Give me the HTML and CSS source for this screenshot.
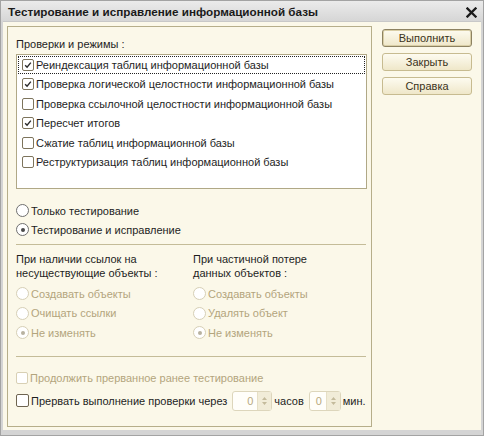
FILE: index.html
```html
<!DOCTYPE html>
<html lang="ru">
<head>
<meta charset="utf-8">
<title>Тестирование и исправление информационной базы</title>
<link rel="stylesheet" href="styles.css">
</head>
<body>
<div class="window">
  <div class="titlebar">
    <span class="title">Тестирование и исправление информационной базы</span>
    <svg class="close" width="11" height="11" viewBox="0 0 11 11"><path d="M1.5 1.5 L9.5 9.5 M9.5 1.5 L1.5 9.5" stroke="#1a1a1a" stroke-width="2.3" stroke-linecap="square"/></svg>
  </div>
  <div class="client">
    <div class="panel">
      <div class="caption">Проверки и режимы :</div>
      <div class="listbox">
        <div class="item focus"><span class="cb on"><svg viewBox="0 0 12 12"><path d="M2.6 6.2 L4.9 8.6 L9.4 3.2" fill="none" stroke="#2a2a2a" stroke-width="1.7"/></svg></span>Реиндексация таблиц информационной базы</div>
        <div class="item"><span class="cb on"><svg viewBox="0 0 12 12"><path d="M2.6 6.2 L4.9 8.6 L9.4 3.2" fill="none" stroke="#2a2a2a" stroke-width="1.7"/></svg></span>Проверка логической целостности информационной базы</div>
        <div class="item"><span class="cb"></span>Проверка ссылочной целостности информационной базы</div>
        <div class="item"><span class="cb on"><svg viewBox="0 0 12 12"><path d="M2.6 6.2 L4.9 8.6 L9.4 3.2" fill="none" stroke="#2a2a2a" stroke-width="1.7"/></svg></span>Пересчет итогов</div>
        <div class="item"><span class="cb"></span>Сжатие таблиц информационной базы</div>
        <div class="item"><span class="cb"></span>Реструктуризация таблиц информационной базы</div>
      </div>
      <div class="modes">
        <div class="opt"><span class="rb"></span>Только тестирование</div>
        <div class="opt"><span class="rb on"></span>Тестирование и исправление</div>
      </div>
      <div class="sep"></div>
      <div class="cols">
        <div class="col left">
          <div class="collabel">При наличии ссылок на<br>несуществующие объекты :</div>
          <div class="radios">
            <div class="opt dis"><span class="rb"></span>Создавать объекты</div>
            <div class="opt dis"><span class="rb"></span>Очищать ссылки</div>
            <div class="opt dis"><span class="rb on"></span>Не изменять</div>
          </div>
        </div>
        <div class="col">
          <div class="collabel">При частичной потере<br>данных объектов :</div>
          <div class="radios">
            <div class="opt dis"><span class="rb"></span>Создавать объекты</div>
            <div class="opt dis"><span class="rb"></span>Удалять объект</div>
            <div class="opt dis"><span class="rb on"></span>Не изменять</div>
          </div>
        </div>
      </div>
      <div class="sep sep2"></div>
      <div class="opt dis cont"><span class="cb"></span>Продолжить прерванное ранее тестирование</div>
      <div class="opt stop"><span class="cb"></span>Прервать выполнение проверки через
        <span class="spin wide"><span class="val">0</span><span class="arrows"><svg width="9" height="16" viewBox="0 0 9 16"><path d="M4.5 4 L7 7 L2 7 Z M4.5 12 L7 9 L2 9 Z" fill="#c4bb9c"/></svg></span></span><span class="unit">часов</span>
        <span class="spin"><span class="val">0</span><span class="arrows"><svg width="9" height="16" viewBox="0 0 9 16"><path d="M4.5 4 L7 7 L2 7 Z M4.5 12 L7 9 L2 9 Z" fill="#c4bb9c"/></svg></span></span><span class="unit">мин.</span>
      </div>
    </div>
    <div class="buttons">
      <div class="btn default">Выполнить</div>
      <div class="btn">Закрыть</div>
      <div class="btn">Справка</div>
    </div>
  </div>
</div>
</body>
</html>
```
FILE: styles.css
```css
html, body {
  margin: 0;
  padding: 0;
  background: #ffffff;
}

.window {
  width: 484px;
  height: 436px;
  box-sizing: border-box;
  border: 1px solid #a3a3a3;
  background: #d4d4d4;
  display: flex;
  flex-direction: column;
  font-family: "Liberation Sans", Arial, sans-serif;
  font-size: 11px;
  color: #1e1e1e;
}

.titlebar {
  height: 20px;
  flex: none;
  display: flex;
  align-items: center;
  justify-content: space-between;
  padding: 0 6px 0 7px;
  background: linear-gradient(#ebebeb, #d6d6d6);
}

.title {
  font-weight: bold;
  font-size: 11.7px;
  color: #1a1a1a;
}

.close {
  margin-top: 2px;
}

.client {
  flex: 1;
  margin: 0 2px 5px 2px;
  background: #fbf8e9;
  display: flex;
  padding: 4px 9px 3px 4px;
  border-top: 1px solid #c8c8c8;
}

.panel {
  width: 367px;
  box-sizing: border-box;
  border: 1px solid #b6ae8a;
  padding: 10px 4px 0 8px;
  display: flex;
  flex-direction: column;
}

.caption {
  line-height: 14px;
  height: 14px;
}

.listbox {
  margin-top: 3px;
  height: 135px;
  box-sizing: border-box;
  border: 1px solid #b0a886;
  background: #ffffff;
}

.item {
  height: 19.5px;
  display: flex;
  align-items: center;
  padding-left: 5px;
  white-space: nowrap;
}

.item.focus {
  outline: 1px dotted #222;
  outline-offset: -2px;
}

.cb {
  width: 12px;
  height: 12px;
  box-sizing: border-box;
  border: 1px solid #7d745c;
  border-radius: 2px;
  background: #fff;
  margin-right: 2px;
  flex: none;
  display: flex;
}

.cb svg {
  width: 10px;
  height: 10px;
}

.opt {
  height: 19px;
  display: flex;
  align-items: center;
  white-space: nowrap;
}

.modes {
  margin-top: 12px;
}

.rb {
  width: 13px;
  height: 13px;
  box-sizing: border-box;
  border: 1px solid #6f6f6f;
  border-radius: 50%;
  background: #fff;
  margin-right: 2px;
  flex: none;
  display: flex;
  align-items: center;
  justify-content: center;
}

.rb.on::after {
  content: "";
  width: 4px;
  height: 4px;
  border-radius: 50%;
  background: #4a4a4a;
}

.sep {
  margin-top: 5px;
  height: 1px;
  background: #c4bc98;
  margin-right: 1px;
}

.sep2 {
  margin-top: 13px;
}

.cols {
  display: flex;
  margin-top: 7px;
}

.col.left {
  width: 177px;
}

.collabel {
  line-height: 14px;
}

.radios {
  margin-top: 4px;
}

.radios .opt {
  height: 19.5px;
}

.opt.dis {
  color: #b3a57d;
}

.opt.dis .rb {
  border-color: #d6cfb6;
}

.opt.dis .rb.on::after {
  background: #b8b2a0;
}

.opt.dis .cb {
  border-color: #d8d0b4;
}

.cont {
  margin-top: 11px;
  height: 20px;
}

.stop {
  margin-top: 2px;
  height: 22px;
}

.stop .cb {
  width: 13px;
  height: 13px;
  border-color: #6e6450;
}

.spin {
  margin-left: 5px;
  width: 40px;
  height: 20px;
  box-sizing: border-box;
  border: 1px solid #ddd6bc;
  border-radius: 3px;
  background: #fffefa;
  display: flex;
  align-items: stretch;
}

.spin + .unit + .spin {
  width: 32px;
}

.val {
  flex: 1;
  text-align: right;
  padding-right: 4px;
  line-height: 18px;
  color: #b7a97f;
}

.arrows {
  width: 13px;
  background: #f1ecd8;
  border-left: 1px solid #e6dfc6;
  display: flex;
  align-items: center;
  justify-content: center;
}

.unit {
  margin-left: 2px;
}

.buttons {
  margin-left: 10px;
  padding-top: 3px;
  display: flex;
  flex-direction: column;
  gap: 6px;
}

.btn {
  width: 90px;
  height: 18px;
  box-sizing: border-box;
  border: 1px solid #c7bb90;
  border-radius: 3px;
  background: linear-gradient(#fdfbf0, #efe7c9);
  display: flex;
  align-items: center;
  justify-content: center;
  color: #3b3320;
}

.btn.default {
  border: 1px solid #8d8261;
  box-shadow: inset 0 0 0 1px #d9cea6;
}
```
